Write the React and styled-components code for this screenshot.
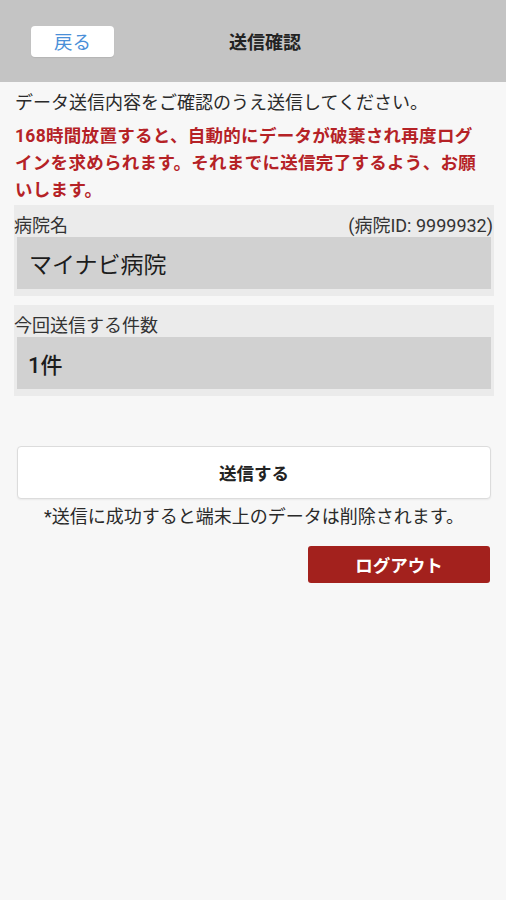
import React from 'react'
import styled, { createGlobalStyle } from 'styled-components'

const GlobalStyle = createGlobalStyle`
    html, body {
        margin: 0;
        padding: 0;
        background: #f7f7f7;
    }
    body {
        font-family: Roboto, "Noto Sans CJK JP", sans-serif;
        color: #222;
    }
`

const Screen = styled.div`
    width: 506px;
    min-height: 900px;
    background: #f7f7f7;
`

const Header = styled.header`
    height: 82px;
    background: #c4c4c4;
    display: flex;
    align-items: center;
    padding: 0 90px 0 31px;
    box-sizing: border-box;
`

const BackButton = styled.button`
    width: 83px;
    height: 31px;
    border: none;
    border-radius: 4px;
    background: #fff;
    color: #4a8fd8;
    font-family: inherit;
    font-size: 18.5px;
    padding: 0;
    box-shadow: 0 1px 1px rgba(0, 0, 0, 0.08);
`

const Title = styled.h1`
    flex: 1;
    margin: 0;
    text-align: center;
    font-size: 18px;
    font-weight: bold;
    color: #222;
`

const Body = styled.main`
    padding: 7px 12px 0 14px;
`

const Intro = styled.p`
    margin: 0 0 7px 1px;
    font-size: 18px;
    line-height: 27px;
    color: #2a2a2a;
`

const Warning = styled.p`
    margin: 0 0 1px 1px;
    font-size: 17.5px;
    line-height: 27px;
    font-weight: bold;
    letter-spacing: 0.3px;
    color: #b52226;
`

const Section = styled.section`
    background: #ebebeb;
    padding: 6px 3px 7px;
    margin-bottom: 9px;
`

const LabelRow = styled.div`
    display: flex;
    justify-content: space-between;
    align-items: center;
    height: 26px;
    margin: 0 -2px 0 -3px;
    font-size: 18px;
    color: #333;
`

const ValueBox = styled.div`
    height: 52px;
    background: #d1d1d1;
    display: flex;
    align-items: center;
    padding-left: ${props => props.$indent || 12}px;
    font-size: ${props => props.$size || 23}px;
    font-weight: ${props => props.$weight || 400};
    color: #1c1c1c;
`

const Actions = styled.div`
    padding: 41px 3px 0;
    display: flex;
    flex-direction: column;
`

const SendButton = styled.button`
    height: 53px;
    background: #fff;
    border: 1px solid #dcdcdc;
    border-radius: 4px;
    font-family: inherit;
    font-size: 17.5px;
    font-weight: bold;
    color: #222;
    box-shadow: 0 1px 2px rgba(0, 0, 0, 0.06);
`

const Note = styled.p`
    margin: 5px 0 0;
    text-align: center;
    font-size: 18px;
    line-height: 26px;
    color: #2a2a2a;
`

const LogoutButton = styled.button`
    align-self: flex-end;
    width: 182px;
    height: 37px;
    margin-top: 16px;
    margin-right: 1px;
    border: none;
    border-radius: 3px;
    background: #a3211d;
    color: #fff;
    font-family: inherit;
    font-size: 17.5px;
    font-weight: bold;
`

export default function App() {
    return (
        <Screen>
            <GlobalStyle />
            <Header>
                <BackButton>戻る</BackButton>
                <Title>送信確認</Title>
            </Header>

            <Body>
                <Intro>データ送信内容をご確認のうえ送信してください。</Intro>
                <Warning>
                    168時間放置すると、自動的にデータが破棄され再度ログ<br />
                    インを求められます。それまでに送信完了するよう、お願<br />
                    いします。
                </Warning>

                <Section>
                    <LabelRow>
                        <span>病院名</span>
                        <span>(病院ID: 9999932)</span>
                    </LabelRow>
                    <ValueBox>マイナビ病院</ValueBox>
                </Section>

                <Section>
                    <LabelRow>
                        <span>今回送信する件数</span>
                    </LabelRow>
                    <ValueBox $size={22} $weight={500} $indent={11}>1件</ValueBox>
                </Section>

                <Actions>
                    <SendButton>送信する</SendButton>
                    <Note>*送信に成功すると端末上のデータは削除されます。</Note>
                    <LogoutButton>ログアウト</LogoutButton>
                </Actions>
            </Body>
        </Screen>
    )
}
